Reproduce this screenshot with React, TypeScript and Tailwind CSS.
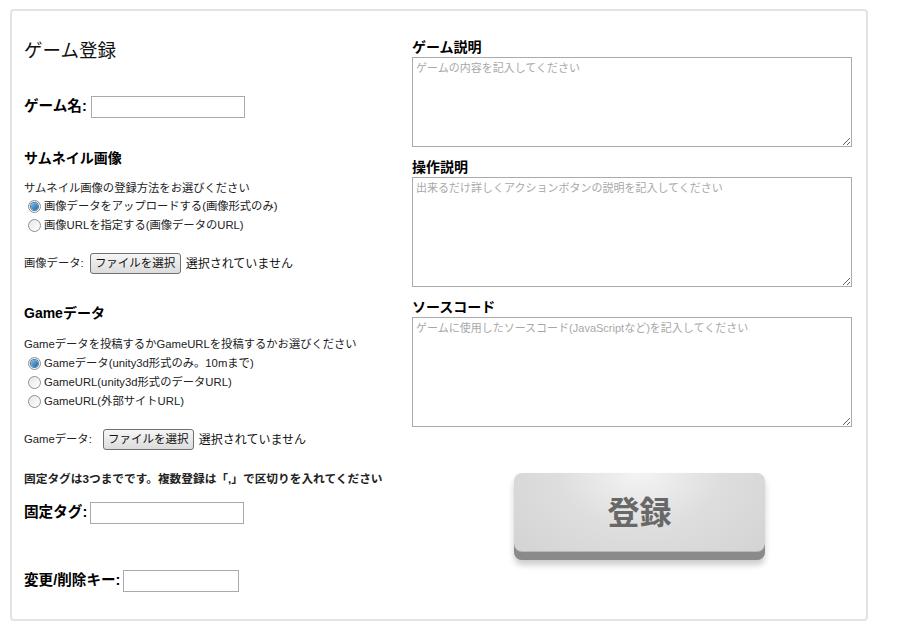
import React from 'react'

const font = { fontFamily: '"Liberation Sans", "Noto Sans CJK JP", sans-serif' }

function Radio({ checked }: { checked?: boolean }) {
  return (
    <span className="ml-[4px] mr-[3px] inline-flex h-[13px] w-[13px] shrink-0 items-center justify-center rounded-full border border-[#8e8f8f] bg-gradient-to-br from-[#e6e6e6] to-[#ffffff]">
      {checked && (
        <span className="h-[7px] w-[7px] rounded-full bg-gradient-to-br from-[#7fc3f0] to-[#1c5f99] shadow-[0_0_0_1px_#3a7fb8]" />
      )}
    </span>
  )
}

function RadioRow({ label, checked }: { label: string; checked?: boolean }) {
  return (
    <div className="flex h-[19px] items-center text-[11.3px] text-[#222]">
      <Radio checked={checked} />
      <span>{label}</span>
    </div>
  )
}

function FileRow({ label, mt, gap }: { label: string; mt: string; gap: string }) {
  return (
    <div className={`flex h-[21px] items-center text-[11.3px] text-[#222] ${mt}`}>
      <span>{label}</span>
      <button className={`${gap} h-[21px] w-[91px] rounded-[3px] border border-[#707070] bg-gradient-to-b from-[#f6f6f6] to-[#dcdcdc] text-[11.5px] leading-[19px] text-[#111]`}>
        ファイルを選択
      </button>
      <span className="ml-[5px] text-[12px] text-[#111]">選択されていません</span>
    </div>
  )
}

function TextInput({ width }: { width: string }) {
  return <input type="text" className={`h-[22px] ${width} border border-[#aaa] bg-white`} />
}

function Field({ label, placeholder, height, mt }: { label: string; placeholder: string; height: string; mt: string }) {
  return (
    <div className={mt}>
      <div className="h-[18px] text-[14px] font-bold leading-[18px] text-black">{label}</div>
      <textarea
        placeholder={placeholder}
        className={`mt-[1px] block w-[440px] ${height} border border-[#aaa] bg-white px-[3px] py-[2px] text-[11px] leading-[16px] placeholder:text-[#a8a8a8]`}
      />
    </div>
  )
}

export default function App() {
  return (
    <div className="min-h-[629px] bg-white pl-[10px] pt-[9px]" style={font}>
      <div className="flex h-[612px] w-[858px] rounded-[4px] border-2 border-[#e3e3e3] pl-[12px]">
        {/* left column */}
        <div className="w-[388px]">
          <h1 className="mt-[30px] h-[20px] text-[18.5px] font-normal leading-[20px] text-[#111]">ゲーム登録</h1>

          <div className="mt-[35px] flex h-[22px] items-center">
            <span className="text-[14.6px] font-bold text-black">ゲーム名:</span>
            <span className="ml-[4px]"><TextInput width="w-[154px]" /></span>
          </div>

          <h2 className="mt-[31px] h-[18px] text-[14px] font-bold leading-[18px] text-black">サムネイル画像</h2>
          <p className="mt-[13px] h-[16px] text-[11.3px] leading-[16px] text-[#222]">サムネイル画像の登録方法をお選びください</p>
          <div className="mt-[1px]">
            <RadioRow checked label="画像データをアップロードする(画像形式のみ)" />
            <RadioRow label="画像URLを指定する(画像データのURL)" />
          </div>
          <FileRow label="画像データ:" mt="mt-[18px]" gap="ml-[6px]" />

          <h2 className="mt-[30px] h-[18px] text-[14px] font-bold leading-[18px] text-black">Gameデータ</h2>
          <p className="mt-[14px] h-[16px] text-[11.3px] leading-[16px] text-[#222]">Gameデータを投稿するかGameURLを投稿するかお選びください</p>
          <div className="mt-[2px]">
            <RadioRow checked label="Gameデータ(unity3d形式のみ。10mまで)" />
            <RadioRow label="GameURL(unity3d形式のデータURL)" />
            <RadioRow label="GameURL(外部サイトURL)" />
          </div>
          <FileRow label="Gameデータ:" mt="mt-[18px]" gap="ml-[11px]" />

          <p className="mt-[21px] h-[16px] text-[11.7px] font-bold leading-[16px] text-[#222]">
            固定タグは3つまでです。複数登録は「,」で区切りを入れてください
          </p>
          <div className="mt-[15px] flex h-[22px] items-center">
            <span className="text-[14.6px] font-bold text-black">固定タグ:</span>
            <span className="ml-[3px]"><TextInput width="w-[154px]" /></span>
          </div>
          <div className="mt-[46px] flex h-[22px] items-center">
            <span className="text-[14.6px] font-bold text-black">変更/削除キー:</span>
            <span className="ml-[3px]"><TextInput width="w-[116px]" /></span>
          </div>
        </div>

        {/* right column */}
        <div className="w-[440px]">
          <Field label="ゲーム説明" placeholder="ゲームの内容を記入してください" height="h-[90px]" mt="mt-[27px]" />
          <Field label="操作説明" placeholder="出来るだけ詳しくアクションボタンの説明を記入してください" height="h-[110px]" mt="mt-[11px]" />
          <Field
            label="ソースコード"
            placeholder="ゲームに使用したソースコード(JavaScriptなど)を記入してください"
            height="h-[110px]"
            mt="mt-[11px]"
          />
          <button className="ml-[102px] mt-[46px] flex h-[87px] w-[251px] items-center justify-center rounded-[8px] bg-[radial-gradient(ellipse_at_50%_0%,#f4f4f4_0%,#dedede_45%,#d2d2d2_100%)] pb-[8px] text-[32px] font-bold text-[#686868] shadow-[inset_0_-8px_0_#8a8a8a,inset_0_-9px_0_#b8b8b8,0_5px_6px_rgba(0,0,0,0.2)]">
            登録
          </button>
        </div>
      </div>
    </div>
  )
}
